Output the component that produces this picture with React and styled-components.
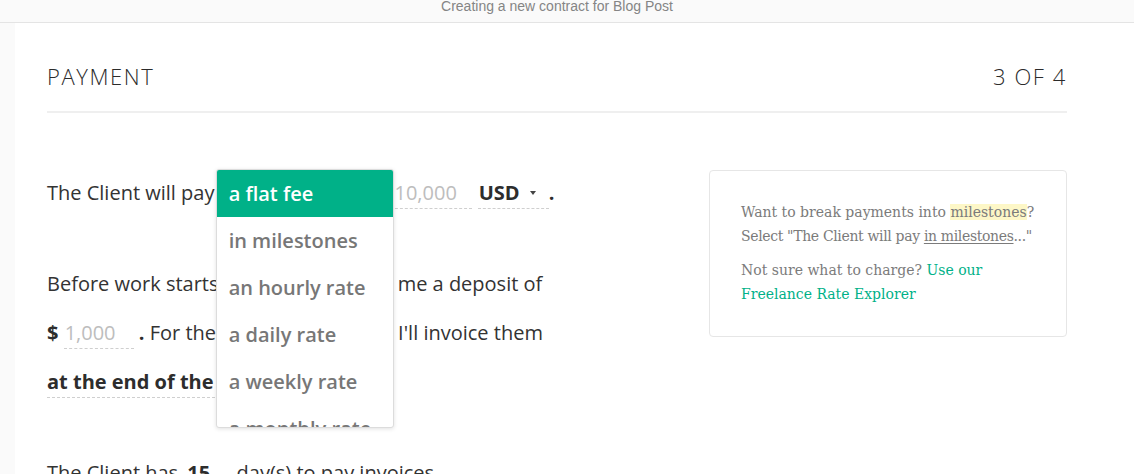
import React from "react";
import styled, { createGlobalStyle } from "styled-components";

const GREEN = "#00b188";

const Global = createGlobalStyle`
  html, body { margin: 0; padding: 0; }
  body {
    background: #fafafa;
    font-family: "Open Sans", "Liberation Sans", sans-serif;
    color: #333;
    overflow: hidden;
  }
`;

const TopBar = styled.div`
  height: 22px;
  background: #fafafa;
  border-bottom: 1px solid #e4e4e4;
  padding-right: 20px;
  text-align: center;
  font-family: "Liberation Sans", Arial, sans-serif;
  font-size: 14px;
  line-height: 13px;
  color: #858585;
  overflow: hidden;
`;

const Panel = styled.main`
  margin-left: 15px;
  background: #fff;
  padding: 0 67px 0 32px;
  min-height: 460px;
`;

const Header = styled.header`
  display: flex;
  justify-content: space-between;
  align-items: center;
  padding: 41px 0 23px;
  line-height: 24px;
  border-bottom: 2px solid #efefef;
  font-size: 22px;
  font-weight: 300;
  letter-spacing: 1.6px;
  color: #2b2b2b;
  text-transform: uppercase;
`;

const Content = styled.div`
  display: flex;
  align-items: flex-start;
  padding-top: 55px;
`;

const Story = styled.div`
  width: 580px;
  font-size: 20px;
  color: #333;
`;

const Para = styled.p`
  margin: 0 0 42px;
  line-height: 49px;
  white-space: nowrap;
`;

const Field = styled.span`
  position: relative;
  display: inline-block;
  line-height: 30px;
  border-bottom: 1px dashed #cfcfcf;
  width: ${(p) => (p.$w ? `${p.$w}px` : "auto")};
  padding-left: ${(p) => p.$pl || 0}px;
  box-sizing: border-box;
  color: ${(p) => (p.$placeholder ? "#bdbdbd" : "#2d2d2d")};
  font-weight: ${(p) => (p.$placeholder ? 400 : 700)};
  vertical-align: baseline;
`;

const Bold = styled.b`
  font-weight: 700;
  color: #2d2d2d;
`;

const Caret = styled.span`
  display: inline-block;
  margin-left: 10px;
  width: 0;
  height: 0;
  border-left: 3px solid transparent;
  border-right: 3px solid transparent;
  border-top: 4px solid #444;
  vertical-align: middle;
  position: relative;
  top: -2px;
`;

const Menu = styled.ul`
  position: absolute;
  left: -4px;
  top: -9px;
  width: 178px;
  height: 259px;
  margin: 0;
  padding: 0;
  list-style: none;
  background: #fff;
  border: 1px solid #dcdcdc;
  border-radius: 3px;
  box-shadow: 0 1px 4px rgba(0, 0, 0, 0.12);
  overflow: hidden;
  box-sizing: border-box;
  z-index: 2;
`;

const Item = styled.li`
  height: 47px;
  line-height: 47px;
  padding: 0 12px;
  font-size: 20px;
  font-weight: 650;
  color: ${(p) => (p.$active ? "#fff" : "#777")};
  background: ${(p) => (p.$active ? GREEN : "transparent")};
`;

const Side = styled.aside`
  margin-left: auto;
  margin-top: 2px;
  width: 358px;
  box-sizing: border-box;
  background: #fff;
  border: 1px solid #e6e6e6;
  border-radius: 4px;
  padding: 29px 20px 30px 31px;
  font-family: "DejaVu Serif", "Liberation Serif", serif;
  font-size: 14px;
  line-height: 24px;
  color: #7b7b7b;
  white-space: nowrap;
`;

const SideP = styled.p`
  margin: 0 0 10px;
  &:last-child { margin-bottom: 0; }
`;

const Tight = styled.span`
  letter-spacing: -0.35px;
`;

const Mark = styled.span`
  background: #fdf7c7;
`;

const Under = styled.span`
  text-decoration: underline;
  text-underline-offset: 2px;
`;

const Link = styled.a`
  color: ${GREEN};
  text-decoration: none;
`;

const options = [
  "a flat fee",
  "in milestones",
  "an hourly rate",
  "a daily rate",
  "a weekly rate",
  "a monthly rate",
];

export default function App() {
  return (
    <>
      <Global />
      <TopBar>Creating a new contract for Blog Post</TopBar>
      <Panel>
        <Header>
          <span>Payment</span>
          <span>3 of 4</span>
        </Header>
        <Content>
          <Story>
            <Para>
              The Client will pay{" "}
              <Field $w={149}>
                a flat fee
                <Menu>
                  {options.map((o, i) => (
                    <Item key={o} $active={i === 0}>
                      {o}
                    </Item>
                  ))}
                </Menu>
              </Field>{" "}
              <Bold>$</Bold>{" "}
              <Field $w={82} $pl={4} $placeholder>
                10,000
              </Field>{" "}
              <Field $w={71} $pl={1}>
                USD<Caret />
              </Field>
              <Bold>.</Bold>
            </Para>
            <Para>
              Before work starts, the Client will pay me a deposit of
              <br />
              <Bold>$</Bold>{" "}
              <Field $w={70} $pl={1} $placeholder>
                1,000
              </Field>{" "}
              <Bold>.</Bold> For the rest of the project, I'll invoice them
              <br />
              <Field>at the end of the project</Field>
            </Para>
            <Para>
              The Client has{" "}
              <Field $w={48} $pl={4}>15</Field> day(s) to pay invoices.
            </Para>
          </Story>
          <Side>
            <SideP>
              Want to break payments into <Mark>milestones</Mark>?
              <br />
              <Tight>
                Select "The Client will pay <Under>in milestones</Under>..."
              </Tight>
            </SideP>
            <SideP>
              Not sure what to charge? <Link href="#">Use our</Link>
              <br />
              <Link href="#">Freelance Rate Explorer</Link>
            </SideP>
          </Side>
        </Content>
      </Panel>
    </>
  );
}
